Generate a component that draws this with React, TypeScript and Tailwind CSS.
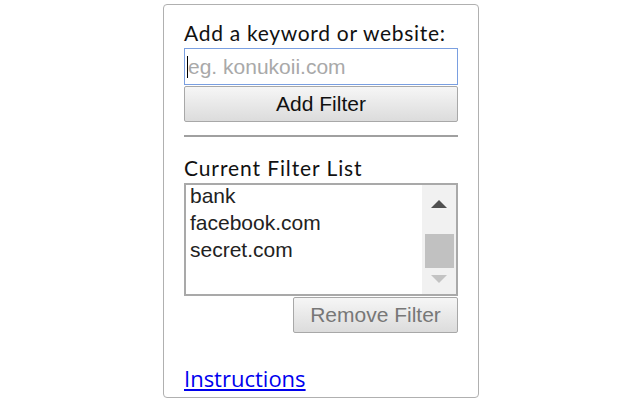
const heading = { fontFamily: '"Lato", "Open Sans", sans-serif' };
const arial = { fontFamily: '"Liberation Sans", Arial, sans-serif' };

const filters = ["bank", "facebook.com", "secret.com"];

function FilterList() {
  return (
    <div className="mt-[3px] flex h-[113px] overflow-hidden border-2 border-[#a9a9a9] bg-white">
      <div className="-mt-[3px] flex-1 pl-[4px]" style={arial}>
        {filters.map((item) => (
          <div key={item} className="text-[21px] leading-[27px] text-[#222]">
            {item}
          </div>
        ))}
      </div>
      <div className="flex w-[34px] flex-col items-center bg-[#f1f1f1]">
        <svg width="16" height="8" viewBox="0 0 16 8" className="mt-[15px]">
          <path d="M0 8 L8 0 L16 8 Z" fill="#505050" />
        </svg>
        <div className="mt-[26px] h-[34px] w-[29px] bg-[#c1c1c1]" />
        <svg width="16" height="8" viewBox="0 0 16 8" className="mt-[7px]">
          <path d="M0 0 L16 0 L8 8 Z" fill="#c3c3c3" />
        </svg>
      </div>
    </div>
  );
}

export default function App() {
  return (
    <div className="min-h-[400px] bg-white">
      <div className="ml-[163px] mt-[4px] h-[394px] w-[316px] rounded-[4px] border border-[#b0b0b0] bg-white pl-[20px] pr-[20px] pt-[16px]">
        <div className="text-[21px] leading-[24px] tracking-[0.7px] text-[#111]" style={heading}>
          Add a keyword or website:
        </div>
        <div className="mt-[3px] flex h-[37px] items-center border border-[#7a9fe0] bg-white pl-[2px]" style={arial}>
          <span className="h-[22px] w-px bg-black" />
          <span className="text-[21px] leading-[24px] text-[#a9a9a9]">eg. konukoii.com</span>
        </div>
        <button
          type="button"
          className="mt-[1px] block h-[36px] w-full rounded-[2px] border border-[#a8a8a8] bg-gradient-to-b from-[#f6f6f6] to-[#dcdcdc] text-[21px] text-[#111]"
          style={arial}
        >
          Add Filter
        </button>
        <div className="mt-[13px] h-[2px] bg-[#a0a0a0]" />
        <div className="mt-[19px] text-[21px] leading-[24px] tracking-[0.9px] text-[#111]" style={heading}>
          Current Filter List
        </div>
        <FilterList />
        <div className="mt-[1px] flex justify-end">
          <button
            type="button"
            className="h-[36px] w-[165px] rounded-[2px] border border-[#a8a8a8] bg-gradient-to-b from-[#f6f6f6] to-[#dcdcdc] text-[21px] text-[#777]"
            style={arial}
          >
            Remove Filter
          </button>
        </div>
        <a
          href="#"
          className="mt-[32px] inline-block text-[22px] leading-[26px] text-[#0000ee] underline"
          style={{ fontFamily: '"Open Sans", sans-serif' }}
        >
          Instructions
        </a>
      </div>
    </div>
  );
}
